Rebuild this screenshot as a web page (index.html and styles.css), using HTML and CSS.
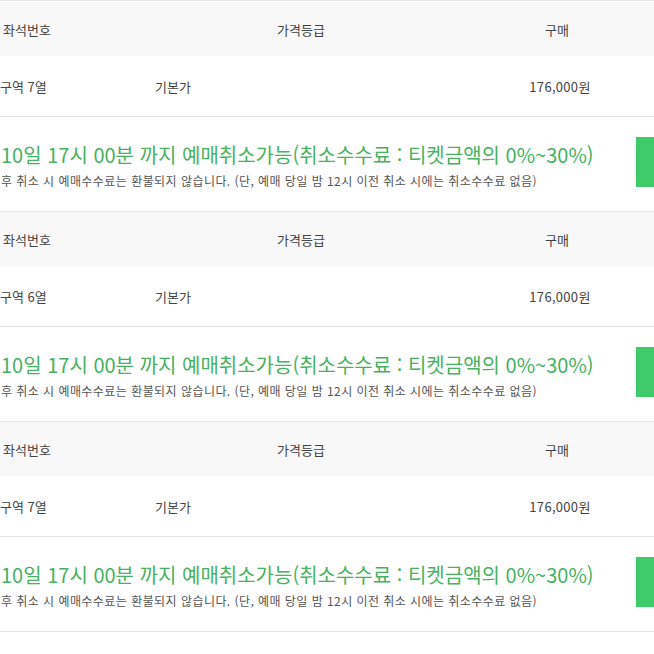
FILE: index.html
```html
<!DOCTYPE html>
<html lang="ko">
<head>
<meta charset="utf-8">
<link rel="stylesheet" href="styles.css">
</head>
<body>
<div class="list">
  <section class="block">
    <div class="head">
      <div class="h1">좌석번호</div>
      <div class="h2">가격등급</div>
      <div class="h3">구매</div>
    </div>
    <div class="row">
      <div class="c1">구역 7열</div>
      <div class="c2">기본가</div>
      <div class="c3">176,000원</div>
    </div>
    <div class="notice">
      <div class="ntext">
        <p class="green">10일 17시 00분 까지 예매취소가능(취소수수료 : 티켓금액의 0%~30%)</p>
        <p class="gray">후 취소 시 예매수수료는 환불되지 않습니다. (단, 예매 당일 밤 12시 이전 취소 시에는 취소수수료 없음)</p>
      </div>
      <div class="btn"></div>
    </div>
  </section>
  <section class="block">
    <div class="head">
      <div class="h1">좌석번호</div>
      <div class="h2">가격등급</div>
      <div class="h3">구매</div>
    </div>
    <div class="row">
      <div class="c1">구역 6열</div>
      <div class="c2">기본가</div>
      <div class="c3">176,000원</div>
    </div>
    <div class="notice">
      <div class="ntext">
        <p class="green">10일 17시 00분 까지 예매취소가능(취소수수료 : 티켓금액의 0%~30%)</p>
        <p class="gray">후 취소 시 예매수수료는 환불되지 않습니다. (단, 예매 당일 밤 12시 이전 취소 시에는 취소수수료 없음)</p>
      </div>
      <div class="btn"></div>
    </div>
  </section>
  <section class="block">
    <div class="head">
      <div class="h1">좌석번호</div>
      <div class="h2">가격등급</div>
      <div class="h3">구매</div>
    </div>
    <div class="row">
      <div class="c1">구역 7열</div>
      <div class="c2">기본가</div>
      <div class="c3">176,000원</div>
    </div>
    <div class="notice">
      <div class="ntext">
        <p class="green">10일 17시 00분 까지 예매취소가능(취소수수료 : 티켓금액의 0%~30%)</p>
        <p class="gray">후 취소 시 예매수수료는 환불되지 않습니다. (단, 예매 당일 밤 12시 이전 취소 시에는 취소수수료 없음)</p>
      </div>
      <div class="btn"></div>
    </div>
  </section>
</div>
</body>
</html>
```

FILE: styles.css
```css
html, body {
  margin: 0;
  padding: 0;
  background: #fff;
  overflow: hidden;
}
body {
  font-family: "Noto Sans CJK KR", "Noto Sans", sans-serif;
  color: #444;
}
.list {
  width: 654px;
  padding-top: 1px;
  border-top: 1px solid #e6e6e6;
}
.block {
  display: flex;
  flex-direction: column;
}
.head {
  display: grid;
  grid-template-columns: 202px 198px 254px;
  height: 54px;
  align-items: center;
  background: #f8f8f8;
  font-size: 13px;
  color: #444;
}
.h1 { padding-left: 3px; }
.h2 { text-align: center; }
.h3 { text-align: center; padding-left: 60px; }
.row {
  display: grid;
  grid-template-columns: 155px 251px 248px;
  height: 60px;
  align-items: center;
  font-size: 13px;
  color: #444;
  border-bottom: 1px solid #e4e4e4;
}
.c3 { text-align: center; padding-left: 60px; letter-spacing: 0.3px; }
.notice {
  display: flex;
  height: 95px;
  border-bottom: 1px solid #e4e4e4;
  box-sizing: border-box;
}
.ntext {
  flex: 1;
  min-width: 0;
  overflow: hidden;
  padding-top: 26px;
}
.ntext p { margin: 0; white-space: nowrap; }
.green {
  font-size: 20px;
  line-height: 24px;
  color: #48b162;
  padding-left: 1px;
}
.gray {
  margin-top: 6px !important;
  font-size: 12px;
  line-height: 16px;
  color: #555;
  padding-left: 1px;
  letter-spacing: 0.45px;
}
.btn {
  margin-top: 20px;
  width: 18px;
  height: 50px;
  background: #3fcb69;
}
```
